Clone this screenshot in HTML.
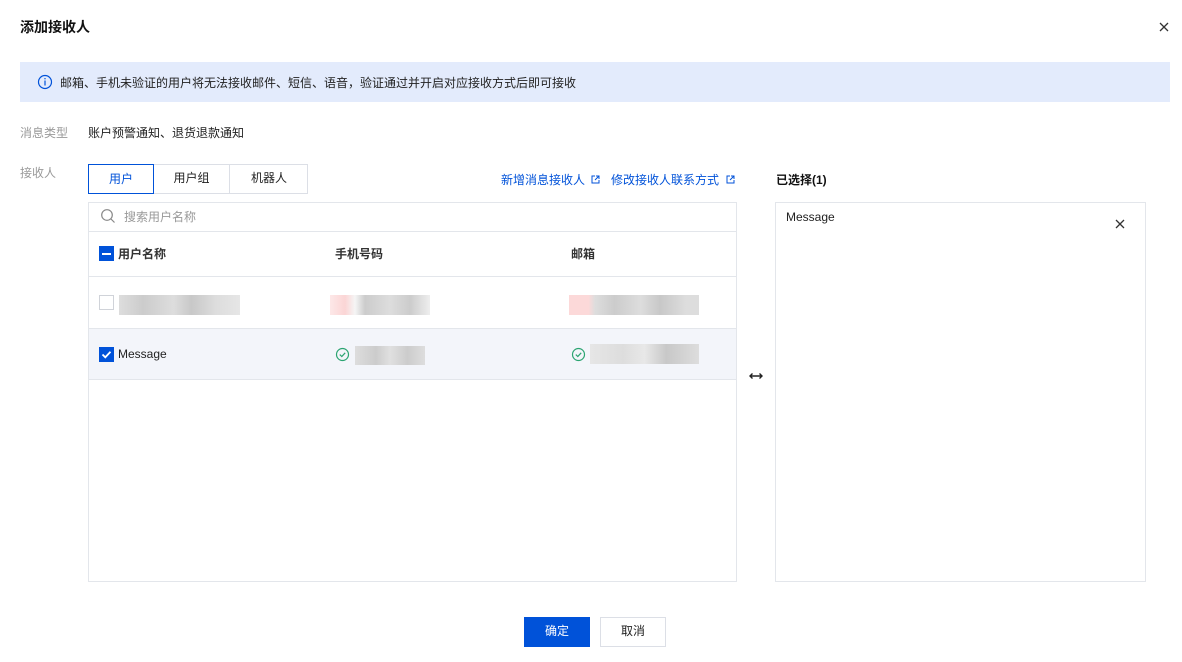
<!DOCTYPE html>
<html><head><meta charset="utf-8"><style>
*{box-sizing:border-box;margin:0;padding:0}
body{width:1182px;height:662px;background:#fff;font-family:"Liberation Sans","Noto Sans CJK SC",sans-serif;font-size:12px;color:#000;position:relative;overflow:hidden}
.a{position:absolute}
</style></head><body>
<div class="a" style="left:20px;top:17px;font-size:14px;font-weight:bold;color:#111">添加接收人</div>
<svg class="a" style="left:1159px;top:22px" width="10" height="10" viewBox="0 0 10 10"><path d="M1 1L9 9M9 1L1 9" stroke="#333" stroke-width="1.3"/></svg>
<div class="a" style="left:20px;top:62px;width:1150px;height:40px;background:#e3ebfc"></div>
<svg class="a" style="left:37px;top:74px" width="16" height="16" viewBox="0 0 16 16"><circle cx="8" cy="8" r="6.5" fill="none" stroke="#0052d9" stroke-width="1.2"/><rect x="7.4" y="4" width="1.2" height="1.3" fill="#0052d9"/><rect x="7.4" y="6.5" width="1.2" height="5" fill="#0052d9"/></svg>
<div class="a" style="left:60px;top:74px;color:#222">邮箱、手机未验证的用户将无法接收邮件、短信、语音，验证通过并开启对应接收方式后即可接收</div>
<div class="a" style="left:20px;top:124px;color:#999">消息类型</div>
<div class="a" style="left:88px;top:124px;color:#222">账户预警通知、退货退款通知</div>
<div class="a" style="left:20px;top:164px;color:#999">接收人</div>
<div class="a" style="left:88px;top:164px;width:220px;height:30px;border:1px solid #dcdfe6"></div>
<div class="a" style="left:88px;top:164px;width:66px;height:30px;border:1px solid #0052d9;color:#0052d9;text-align:center;line-height:28px">用户</div>
<div class="a" style="left:154px;top:164px;width:76px;height:30px;border-right:1px solid #dcdfe6;text-align:center;line-height:29px;color:#222">用户组</div>
<div class="a" style="left:230px;top:164px;width:78px;height:30px;text-align:center;line-height:29px;color:#222">机器人</div>
<div class="a" style="left:501px;top:171px;color:#0052d9">新增消息接收人</div>
<div class="a" style="left:611px;top:171px;color:#0052d9">修改接收人联系方式</div>
<svg class="a" style="left:591px;top:175px" width="9" height="9" viewBox="0 0 9 9"><path d="M4 1H1V8H8V5M5 1H8V4M8 1L4 5" fill="none" stroke="#0052d9"/></svg>
<svg class="a" style="left:726px;top:175px" width="9" height="9" viewBox="0 0 9 9"><path d="M4 1H1V8H8V5M5 1H8V4M8 1L4 5" fill="none" stroke="#0052d9"/></svg>
<div class="a" style="left:88px;top:202px;width:649px;height:380px;border:1px solid #e3e6eb"></div>
<svg class="a" style="left:100px;top:208px" width="16" height="16" viewBox="0 0 16 16"><circle cx="7" cy="7" r="5.3" fill="none" stroke="#888" stroke-width="1.2"/><path d="M11 11L14.5 14.5" stroke="#888" stroke-width="1.2"/></svg>
<div class="a" style="left:124px;top:208px;color:#999">搜索用户名称</div>
<div class="a" style="left:89px;top:231px;width:647px;height:1px;background:#e3e6eb"></div>
<div class="a" style="left:99px;top:246px;width:15px;height:15px;background:#0052d9"><div style="margin:6.5px 3px;height:2px;background:#fff"></div></div>
<div class="a" style="left:118px;top:245px;color:#333;font-weight:bold">用户名称</div>
<div class="a" style="left:335px;top:245px;color:#333;font-weight:bold">手机号码</div>
<div class="a" style="left:571px;top:245px;color:#333;font-weight:bold">邮箱</div>
<div class="a" style="left:89px;top:276px;width:647px;height:1px;background:#e3e6eb"></div>
<div class="a" style="left:99px;top:295px;width:15px;height:15px;border:1px solid #d0d3d9;background:#fff"></div>
<div class="a" style="left:119px;top:295px;width:121px;height:20px;background:linear-gradient(90deg,#ddd,#ccc 20%,#ddd 45%,#c8c8c8 60%,#ddd 80%,#e6e6e6)"></div>
<div class="a" style="left:330px;top:295px;width:100px;height:20px;background:linear-gradient(90deg,#fde8e8,#fbd5d5 15%,#f5f5f5 25%,#ccc 35%,#ddd 60%,#ccc 80%,#eee)"></div>
<div class="a" style="left:569px;top:295px;width:130px;height:20px;background:linear-gradient(90deg,#fcd9d9,#fcd9d9 15%,#ddd 20%,#ccc 35%,#ddd 55%,#c8c8c8 70%,#ddd 90%)"></div>
<div class="a" style="left:89px;top:328px;width:647px;height:52px;background:#f3f5fa;border-top:1px solid #e3e6eb;border-bottom:1px solid #e3e6eb"></div>
<div class="a" style="left:99px;top:347px;width:15px;height:15px;background:#0052d9"></div>
<svg class="a" style="left:99px;top:347px" width="15" height="15" viewBox="0 0 15 15"><path d="M3.5 7.5L6.3 10.3L11.5 4.8" fill="none" stroke="#fff" stroke-width="1.8"/></svg>
<div class="a" style="left:118px;top:347px;color:#222">Message</div>
<svg class="a" style="left:335px;top:347px" width="15" height="15" viewBox="0 0 15 15"><circle cx="7.5" cy="7.5" r="6" fill="none" stroke="#2ba471" stroke-width="1.2"/><path d="M4.8 7.6L6.8 9.5L10.2 5.8" fill="none" stroke="#2ba471" stroke-width="1.2"/></svg>
<div class="a" style="left:355px;top:346px;width:70px;height:19px;background:linear-gradient(90deg,#ddd,#ccc 30%,#e0e0e0 50%,#ccc 75%,#ddd)"></div>
<svg class="a" style="left:571px;top:347px" width="15" height="15" viewBox="0 0 15 15"><circle cx="7.5" cy="7.5" r="6" fill="none" stroke="#2ba471" stroke-width="1.2"/><path d="M4.8 7.6L6.8 9.5L10.2 5.8" fill="none" stroke="#2ba471" stroke-width="1.2"/></svg>
<div class="a" style="left:590px;top:344px;width:109px;height:20px;background:linear-gradient(90deg,#e6e6e6,#ddd 30%,#e8e8e8 50%,#c8c8c8 70%,#ddd)"></div>
<svg class="a" style="left:748px;top:372px" width="16" height="8" viewBox="0 0 16 8"><path d="M2 4H14M4.5 1.5L2 4L4.5 6.5M11.5 1.5L14 4L11.5 6.5" fill="none" stroke="#222" stroke-width="1.4"/></svg>
<div class="a" style="left:776px;top:171px;font-weight:bold;color:#111">已选择(1)</div>
<div class="a" style="left:775px;top:202px;width:371px;height:380px;border:1px solid #e3e6eb"></div>
<div class="a" style="left:786px;top:210px;color:#222">Message</div>
<svg class="a" style="left:1115px;top:219px" width="10" height="10" viewBox="0 0 10 10"><path d="M1 1L9 9M9 1L1 9" stroke="#333" stroke-width="1.3"/></svg>
<div class="a" style="left:524px;top:617px;width:66px;height:30px;background:#0052d9;color:#fff;text-align:center;line-height:29px">确定</div>
<div class="a" style="left:600px;top:617px;width:66px;height:30px;border:1px solid #dcdfe6;color:#222;text-align:center;line-height:27px">取消</div>
</body></html>
